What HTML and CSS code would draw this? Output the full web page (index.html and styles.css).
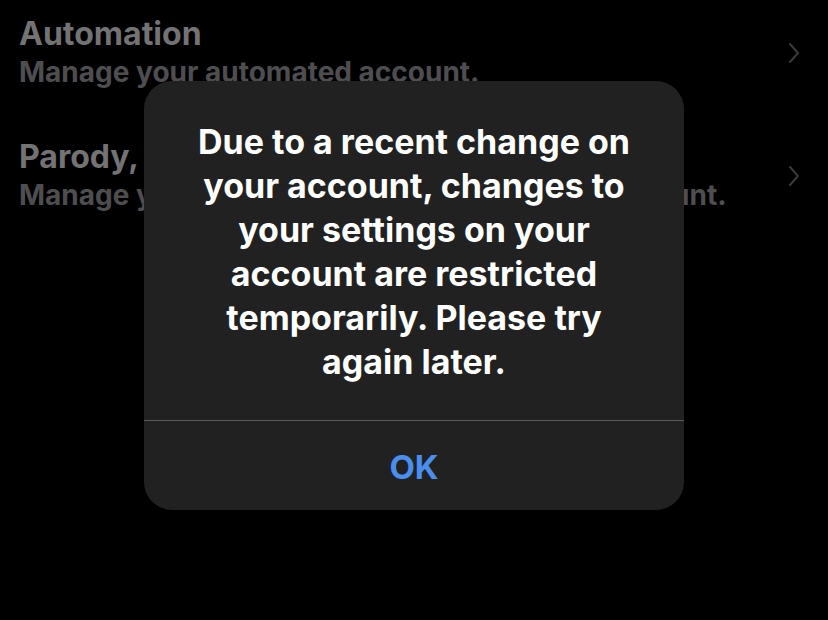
FILE: index.html
```html
<html>

<head>
    <link rel="stylesheet" href="styles.css">
</head>

<body>
    <div class="settings">
        <div class="row">
            <div class="rowText">
                <div class="title">Automation</div>
                <div class="subtitle">Manage your automated account.</div>
            </div>
            <svg class="chevron" viewBox="0 0 12 22" width="12" height="22">
                <path d="M2 2 L10 11 L2 20" fill="none" stroke="currentColor" stroke-width="2" stroke-linecap="round" stroke-linejoin="round"/>
            </svg>
        </div>
        <div class="row">
            <div class="rowText">
                <div class="title">Parody, commentary and fan accounts</div>
                <div class="subtitle">Manage your parody, commentary and fan account.</div>
            </div>
            <svg class="chevron" viewBox="0 0 12 22" width="12" height="22">
                <path d="M2 2 L10 11 L2 20" fill="none" stroke="currentColor" stroke-width="2" stroke-linecap="round" stroke-linejoin="round"/>
            </svg>
        </div>
    </div>

    <div class="alert">
        <p class="message">Due to a recent change on your account, changes to your settings on your account are restricted temporarily. Please try again later.</p>
        <button class="okButton">OK</button>
    </div>
</body>

</html>
```

FILE: styles.css
```css
body {
    margin: 0;
    width: 828px;
    height: 620px;
    overflow: hidden;
    background: #000;
    font-family: Inter, "Noto Sans", sans-serif;
    position: relative;
}

.settings {
    padding: 14px 0 0 19px;
}

.row {
    display: flex;
    align-items: flex-start;
    height: 123px;
}

.rowText {
    flex: 1;
    min-width: 0;
    white-space: nowrap;
    overflow: hidden;
}

.title {
    font-size: 32px;
    font-weight: 700;
    color: #737373;
    line-height: 40px;
}

.subtitle {
    font-size: 28px;
    font-weight: 700;
    color: #4e4e50;
    line-height: 36px;
}

.chevron {
    flex-shrink: 0;
    color: #3a3a3a;
    margin: 28px 28px 0 20px;
}

.alert {
    position: absolute;
    left: 144px;
    top: 81px;
    width: 540px;
    height: 429px;
    background: #212121;
    border-radius: 28px;
    display: flex;
    flex-direction: column;
}

.message {
    margin: 0;
    height: 340px;
    box-sizing: border-box;
    padding: 39px 40px 0;
    border-bottom: 1px solid #5a5a5a;
    color: #fff;
    font-size: 34px;
    font-weight: 700;
    line-height: 44px;
    text-align: center;
}

.okButton {
    flex: 1;
    background: none;
    border: none;
    color: #4a8ff0;
    font-family: inherit;
    font-size: 33px;
    font-weight: 700;
    padding-top: 4px;
}
```
